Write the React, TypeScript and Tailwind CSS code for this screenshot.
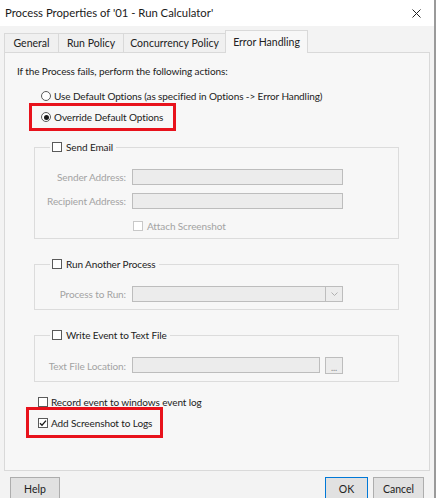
import type { ReactNode } from 'react';

const font = "font-['Lato','Noto_Sans',sans-serif]";

function Radio({ checked }: { checked?: boolean }) {
  return (
    <span className="flex h-[10px] w-[10px] shrink-0 items-center justify-center rounded-full border border-[#5a5a5a] bg-white">
      {checked && <span className="h-[5px] w-[5px] rounded-full bg-[#1a1a1a]" />}
    </span>
  );
}

function Check({ checked, disabled }: { checked?: boolean; disabled?: boolean }) {
  return (
    <span
      className={`flex h-[10px] w-[10px] shrink-0 items-center justify-center border bg-white ${
        disabled ? 'border-[#c8c8c8]' : 'border-[#5a5a5a]'
      }`}
    >
      {checked && (
        <svg width="8" height="8" viewBox="0 0 8 8">
          <path d="M1 4.2 L3 6.2 L7 1.6" fill="none" stroke="#1a1a1a" strokeWidth="1.3" />
        </svg>
      )}
    </span>
  );
}

function Group({ title, className, children }: { title: string; className: string; children: ReactNode }) {
  return (
    <fieldset className={`ml-[29px] w-[365px] border border-[#dcdcdc] ${className}`}>
      <legend className="ml-[15px] flex h-[14px] items-center gap-[4px] pl-[2px] pr-[3px] text-[#222]">
        <Check />
        <span>{title}</span>
      </legend>
      {children}
    </fieldset>
  );
}

function Field({ label, children }: { label: string; children: ReactNode }) {
  return (
    <div className="flex items-center">
      <span className="w-[91px] shrink-0 text-right text-[#a3a3a3]">{label}</span>
      <div className="ml-[6px] flex">{children}</div>
    </div>
  );
}

const box = 'h-[16px] border border-[#bdbdbd] bg-[#ececec]';

export default function App() {
  return (
    <div className={`flex h-[498px] w-[438px] overflow-hidden bg-white ${font} text-[10px] leading-[14px] tracking-[-0.1px]`}>
      <div className="flex w-[434px] shrink-0 flex-col">
        {/* Title bar */}
        <div className="flex h-[26px] shrink-0 items-center justify-between bg-white pl-[5px] pr-[13px]">
          <span className="text-[11.3px] tracking-normal text-[#1a1a1a]">Process Properties of '01 - Run Calculator'</span>
          <svg width="9" height="9" viewBox="0 0 9 9">
            <path d="M0.5 0.5 L8.5 8.5 M8.5 0.5 L0.5 8.5" stroke="#222" strokeWidth="1" />
          </svg>
        </div>

        <div className="flex flex-1 flex-col bg-[#f3f3f3] pl-[4px]">
          {/* Tabs */}
          <div className="flex h-[26px] items-end text-[10.5px] tracking-normal text-[#222]">
            <div className="flex h-[19px] w-[54px] items-center justify-center border-l border-t border-[#d9d9d9] bg-[#f0f0f0]">General</div>
            <div className="flex h-[19px] w-[65px] items-center justify-center border-l border-t border-[#d9d9d9] bg-[#f0f0f0]">Run Policy</div>
            <div className="flex h-[19px] w-[102px] items-center justify-center border-l border-t border-[#d9d9d9] bg-[#f0f0f0]">Concurrency Policy</div>
            <div className="relative z-10 -mb-px flex h-[23px] w-[83px] items-center justify-center border-x border-t border-[#d9d9d9] bg-[#f7f7f7]">
              Error Handling
            </div>
          </div>

          {/* Panel */}
          <div className="flex h-[419px] w-[426px] flex-col border border-[#d9d9d9] bg-[#f7f7f7] text-[#222]">
            <p className="ml-[12px] mt-[11px]">If the Process fails, perform the following actions:</p>

            <div className="ml-[36px] mt-[11px] flex h-[14px] items-center gap-[3px]">
              <Radio />
              <span>Use Default Options (as specified in Options -&gt; Error Handling)</span>
            </div>

            <div className="ml-[24px] flex h-[28px] w-[147px] items-center gap-[3px] border-[3px] border-[#e8121c] pl-[9px]">
              <Radio checked />
              <span>Override Default Options</span>
            </div>

            <Group title="Send Email" className="mt-[9px] pb-[5px] pt-[15px]">
              <div className="flex flex-col gap-[8px]">
                <Field label="Sender Address:">
                  <div className={`${box} w-[211px]`} />
                </Field>
                <Field label="Recipient Address:">
                  <div className={`${box} w-[211px]`} />
                </Field>
              </div>
              <div className="ml-[98px] mt-[10px] flex h-[14px] items-center gap-[4px] text-[#a3a3a3]">
                <Check disabled />
                <span>Attach Screenshot</span>
              </div>
            </Group>

            <Group title="Run Another Process" className="mt-[18px] pb-[7px] pt-[15px]">
              <Field label="Process to Run:">
                <div className={`${box} flex w-[211px] justify-end`}>
                  <div className="flex w-[17px] items-center justify-center border-l border-[#bdbdbd]">
                    <svg width="7" height="4" viewBox="0 0 7 4">
                      <path d="M0.5 0.5 L3.5 3.5 L6.5 0.5" fill="none" stroke="#b0b0b0" strokeWidth="1" />
                    </svg>
                  </div>
                </div>
              </Field>
            </Group>

            <Group title="Write Event to Text File" className="mt-[18px] pb-[7px] pt-[15px]">
              <Field label="Text File Location:">
                <div className={`${box} w-[188px]`} />
                <div className="ml-[5px] flex h-[17px] w-[18px] items-end justify-center border border-[#bdbdbd] bg-[#ececec] text-[9px] leading-[10px] text-[#888]">
                  ...
                </div>
              </Field>
            </Group>

            <div className="ml-[33px] mt-[14px] flex h-[11px] items-center gap-[3px]">
              <Check />
              <span>Record event to windows event log</span>
            </div>

            <div className="ml-[21px] flex h-[31px] w-[137px] items-center gap-[3px] border-[3px] border-[#e8121c] pl-[9px]">
              <Check checked />
              <span>Add Screenshot to Logs</span>
            </div>
          </div>

          {/* Buttons */}
          <div className="mt-[6px] flex text-[10.5px] tracking-normal text-[#222]">
            <button className="ml-[6px] flex h-[23px] w-[50px] items-center justify-center border border-[#adadad] bg-[#e1e1e1]">Help</button>
            <button className="ml-auto flex h-[23px] w-[43px] items-center justify-center border border-[#0078d7] bg-[#e1e1e1]">OK</button>
            <button className="ml-[5px] mr-[10px] flex h-[23px] w-[51px] items-center justify-center border border-[#adadad] bg-[#e1e1e1]">Cancel</button>
          </div>
        </div>
      </div>
      <div className="w-[2px] shrink-0 bg-[#9a9a9a]" />
    </div>
  );
}
